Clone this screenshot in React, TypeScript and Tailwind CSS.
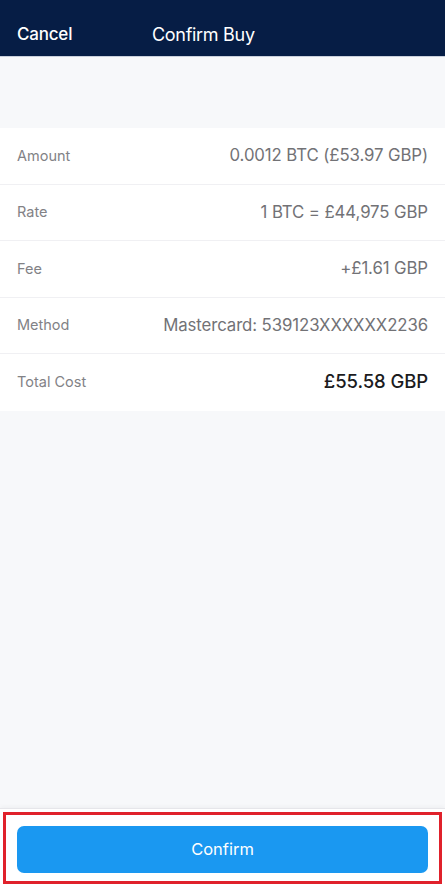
const rows = [
  { label: 'Amount', value: '0.0012 BTC (£53.97 GBP)' },
  { label: 'Rate', value: '1 BTC = £44,975 GBP' },
  { label: 'Fee', value: '+£1.61 GBP' },
  { label: 'Method', value: 'Mastercard: 539123XXXXXX2236' },
];

export default function App() {
  return (
    <div
      className="flex flex-col h-[892px] w-[445px] bg-[#f7f8fa] overflow-hidden"
      style={{ fontFamily: 'Inter, "Liberation Sans", sans-serif' }}
    >
      {/* header */}
      <div className="h-[57px] shrink-0 bg-[#061d45] border-b border-[#c9d0dc] flex items-center pt-[13px] text-white">
        <span className="pl-[17px] w-[152px] text-[17px] font-medium tracking-[-0.2px]">Cancel</span>
        <span className="text-[18px] tracking-[-0.3px]">Confirm Buy</span>
      </div>

      <div className="h-[71px] shrink-0" />

      {/* summary list */}
      <div className="bg-white shrink-0">
        {rows.map((r) => (
          <div
            key={r.label}
            className="h-[56.5px] flex items-center justify-between px-[17px] border-b border-[#f0f0f3]"
          >
            <span className="text-[14.5px] text-[#828286]">{r.label}</span>
            <span className="text-[16.8px] text-[#727276] tracking-[-0.1px]">{r.value}</span>
          </div>
        ))}
        <div className="h-[56.5px] flex items-center justify-between px-[17px]">
          <span className="text-[14.5px] text-[#828286]">Total Cost</span>
          <span className="text-[18.5px] font-medium text-[#1c1c1e] tracking-[-0.1px]">£55.58 GBP</span>
        </div>
      </div>

      <div className="flex-1" />

      {/* bottom bar */}
      <div className="h-[84px] shrink-0 bg-white border-t border-[#e6e6ea] shadow-[0_-2px_4px_rgba(0,0,0,0.03)] pt-[3px] px-[3px]">
        <div className="h-[72px] border-[3px] border-[#e0212b] px-[11px] pt-[11px]">
          <button className="w-full h-[47px] rounded-[7px] bg-[#1a98f1] text-white text-[16.5px] font-normal">
            Confirm
          </button>
        </div>
      </div>
    </div>
  );
}
